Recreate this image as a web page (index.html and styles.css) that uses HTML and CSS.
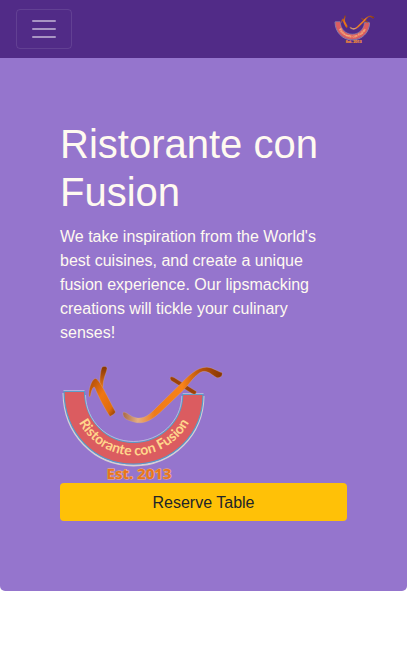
FILE: index.html
```
<!DOCTYPE html>
<html lang="en">
<head>
<meta charset="utf-8">
<meta name="viewport" content="width=device-width, initial-scale=1">
<title>Ristorante con Fusion</title>
<link rel="stylesheet" href="styles.css">
</head>
<body>
<nav class="navbar">
  <button class="toggler" type="button" aria-label="Toggle navigation">
    <svg class="toggler-icon" viewBox="0 0 30 30" aria-hidden="true"><path d="M4 7h22M4 15h22M4 23h22" stroke="currentColor" stroke-width="2" stroke-linecap="round" stroke-miterlimit="10"/></svg>
  </button>
  <a class="brand" href="#" aria-label="Ristorante con Fusion">
    <svg class="brand-logo" viewBox="0 0 165 122" aria-hidden="true"><use href="#logo"/></svg>
  </a>
</nav>
<header class="hero">
  <h1>Ristorante con Fusion</h1>
  <p>We take inspiration from the World's best cuisines, and create a unique fusion experience. Our lipsmacking creations will tickle your culinary senses!</p>
  <svg class="hero-logo" viewBox="0 1 165 122" role="img" aria-label="Ristorante con Fusion, Est. 2013">
    <defs>
      <linearGradient id="stem" x1="0" y1="0" x2="1" y2="1">
        <stop offset="0" stop-color="#a84808"/><stop offset=".45" stop-color="#ef7613"/><stop offset=".8" stop-color="#e06c0c"/><stop offset="1" stop-color="#803404"/>
      </linearGradient>
      <linearGradient id="twig" x1="0" y1="0" x2="0" y2="1">
        <stop offset="0" stop-color="#843403"/><stop offset="1" stop-color="#ee7a18"/>
      </linearGradient>
      <linearGradient id="swash" gradientUnits="userSpaceOnUse" x1="63" y1="0" x2="162" y2="0">
        <stop offset="0" stop-color="#a86a48"/><stop offset=".15" stop-color="#e5ae82"/><stop offset=".32" stop-color="#ef7a18"/><stop offset=".6" stop-color="#f98218"/><stop offset=".78" stop-color="#b9540b"/><stop offset="1" stop-color="#873503"/>
      </linearGradient>
      <path id="ribbon-line" d="M11.500 33A62 62 0 0 0 136.500 33"/>
    </defs>
    <g id="logo">
      <path d="M3.500 33C4 74 34 105.500 73.500 105.500S143 75 143.500 36" fill="none" stroke="#d5d0d6" stroke-width="2"/>
      <path d="M4 31.500H24.500C25 60 46 82.500 73.500 82.500S122.500 61 122.700 34.500H143C143 74 113 104 73.500 104S4.500 73 4 31.500Z" fill="#db5c60" stroke="#559bc8" stroke-width="1.200"/>
      <path d="M3.500 30.600H24.500M122.700 33.600H143.500M25.500 35C26 61 47 81.500 73.500 81.500S121.500 61 121.800 36" fill="none" stroke="#c8d4e4" stroke-width=".7"/>
      <g stroke="#ddb592" stroke-width=".3">
        <path d="M40 24C39.500 18 41 9 42 7.500C43 6 47 6 47 8.500C46.500 13 43 18 43 27L40.500 29Z" fill="url(#twig)"/>
        <path d="M29.200 37C28 30 31.500 20 35 18.500C37 18 40 23 43 28L55.500 52L54 54L50 56.500C45 49 39 38 35 28C34 25 31 30 30.500 36Z" fill="url(#stem)"/>
        <path d="M110 18Q111 16 114 17.500L136.500 31.500L136 33.500Q134.500 35 132 33.500L111 20.500Z" fill="#9c4208"/>
        <path d="M63 52.500C66 51 69 56 75 57.500C84 60 90 54 96 48L118.500 26C128 16 137 7 147 7.200C154 8 158 12 162 12.500C163 16 160 18.500 156.500 17.500C151 14.500 147 9 140 12.500C133 17 128 26 121.500 32L99.500 53C90 61.500 82 64.500 74 62C67 60 62.500 58.500 63 52.500Z" fill="url(#swash)"/>
      </g>
      <text class="ribbon-text"><textPath href="#ribbon-line" startOffset="50%">Ristorante con Fusion</textPath></text>
      <text class="est-text" x="79" y="119">Est. 2013</text>
    </g>
  </svg>
  <a class="reserve" href="#">Reserve Table</a>
</header>
</body>
</html>
```
FILE: styles.css
```
* { box-sizing: border-box; }
body {
  margin: 0;
  background: #fff;
  color: #212529;
  font: 16px/24px "Liberation Sans", Arial, sans-serif;
}
.navbar {
  display: flex;
  align-items: center;
  justify-content: space-between;
  min-height: 58px;
  padding: 8px 16px;
  background: #512b87;
}
.toggler {
  display: flex;
  padding: 4px 12px;
  border: 1px solid rgba(255, 255, 255, .1);
  border-radius: 4px;
  background: transparent;
  color: rgba(255, 255, 255, .5);
}
.toggler-icon {
  width: 30px;
  height: 30px;
}
.brand {
  display: flex;
  margin-right: 16px;
}
.brand-logo {
  width: 41px;
  height: 30px;
}
.hero {
  padding: 62px 60px 70px;
  border-radius: 0 0 5px 5px;
  background: #9575cd;
  color: floralwhite;
}
.hero h1 {
  margin: 0 0 9px;
  font-size: 40px;
  line-height: 48px;
  font-weight: 400;
}
.hero p { margin: 0 0 16px; }
.hero-logo {
  display: block;
  width: 165px;
  height: 122px;
}
.ribbon-text {
  font: 700 14px Lato, sans-serif;
  fill: #ffd68c;
  text-anchor: middle;
}
.est-text {
  font: 700 15px "Noto Sans", sans-serif;
  fill: #e8761a;
  stroke: #f2b688;
  stroke-width: 1px;
  paint-order: stroke;
  text-anchor: middle;
}
.reserve {
  display: block;
  padding: 8px 12px 6px;
  border-radius: 4px;
  background: #ffc107;
  color: #212529;
  text-align: center;
  text-decoration: none;
}
```
